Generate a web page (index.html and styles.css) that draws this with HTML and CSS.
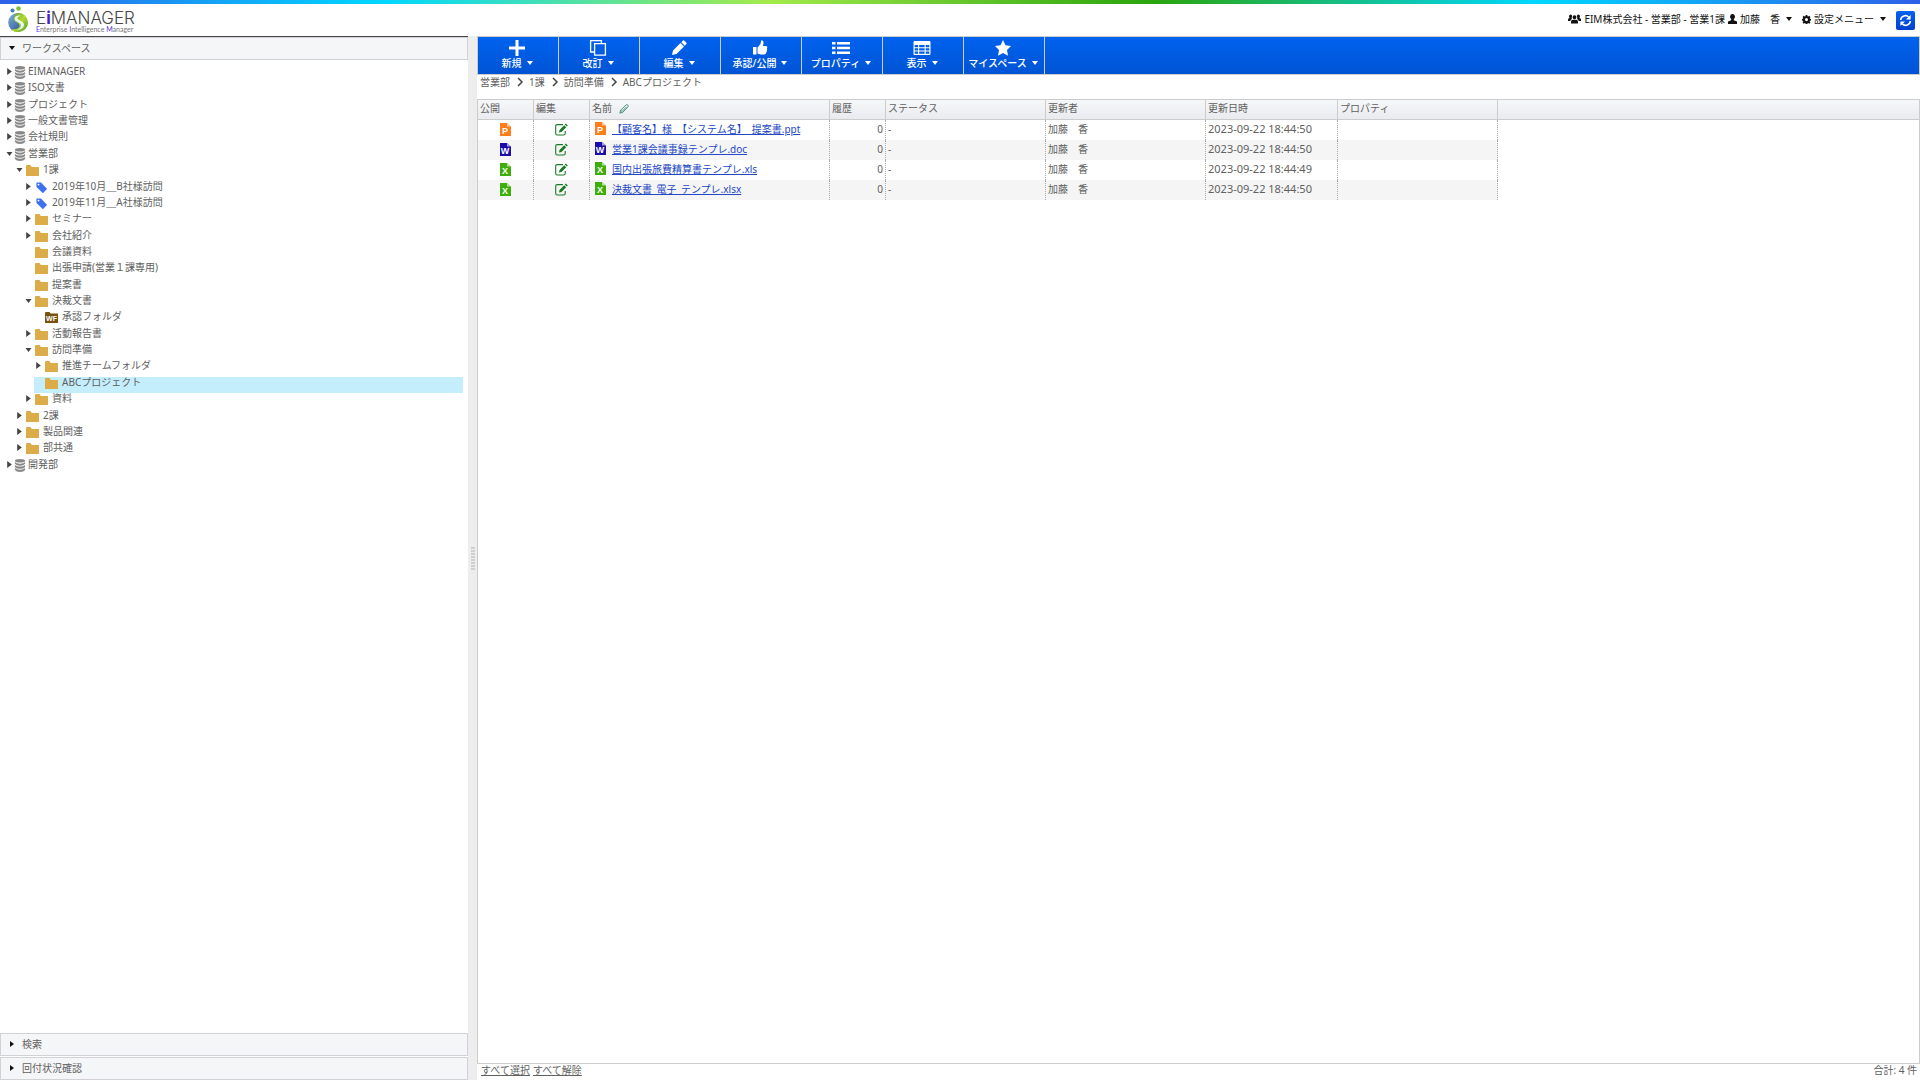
FILE: index.html
```html
<!DOCTYPE html>
<html lang="ja">
<head>
<meta charset="utf-8">
<title>EIMANAGER</title>
<meta name="viewport" content="width=device-width, initial-scale=1">
<link rel="stylesheet" href="styles.css">
</head>
<body>
<svg class="sprite" aria-hidden="true">
  <defs>
    <linearGradient id="g-blue" x1="0" y1="0" x2="1" y2="1"><stop offset="0" stop-color="#7fb6d8"/><stop offset="1" stop-color="#1d3f8f"/></linearGradient>
    <linearGradient id="g-green" x1="0" y1="0" x2="1" y2="1"><stop offset="0" stop-color="#4f9e2c"/><stop offset=".5" stop-color="#b5d92a"/><stop offset="1" stop-color="#4c9a3a"/></linearGradient>
    <symbol id="right" viewBox="0 0 4 6"><path d="M0 0l4 3-4 3z"/></symbol>
    <symbol id="down" viewBox="0 0 6 4"><path d="M0 0h6L3 4z"/></symbol>
    <symbol id="db" viewBox="0 0 12 14"><ellipse cx="6" cy="2" rx="5.500" ry="1.900"/><path d="M.5 3.200Q2 5 6 5t5.500-1.800V5.200Q10 7.200 6 7.200T.5 5.200zM.5 6.500Q2 8.200 6 8.200t5.500-1.700V8.500Q10 10.500 6 10.500T.5 8.500zM.5 9.700Q2 11.500 6 11.500t5.500-1.800V11.900Q10 13.900 6 13.900T.5 11.900z"/></symbol>
    <symbol id="folder" viewBox="0 0 13 11"><path d="M0 1Q0 0 1 0h3.500l1.300 2H13v9H0z"/></symbol>
    <symbol id="tag" viewBox="0 0 12 12"><path fill-rule="evenodd" d="M.5 1Q.5.500 1 .500h4.500L11.700 7q.5.500 0 1L8 11.700q-.5.500-1 0L.5 5.500zM2.800 1.800a1 1 0 100 2 1 1 0 000-2z"/></symbol>
    <symbol id="pen" viewBox="0 0 16 16"><path d="M1 15l1-4.500L9.500 3 13 6.500 5.500 14zM10.300 2.200L12 .6q.6-.5 1.200 0l2.200 2.200q.6.600 0 1.200l-1.600 1.700z"/></symbol>
    <symbol id="edit" viewBox="0 0 13 13"><path fill="none" stroke="currentColor" stroke-width="1.100" d="M8 1.600H2.200Q.7 1.600.7 3v7.500Q.7 12 2.200 12h6.500q1.500 0 1.500-1.500V8"/><path d="M4 9.500l.5-2.600L9.200 2.200l2 2-4.700 4.700zM9.800 1.600l1-1 2 2-1 1z"/></symbol>
    <symbol id="page" viewBox="0 0 11 13"><path d="M0 0h7l4 3.500V13H0z"/><path fill="#fff" opacity=".6" d="M7 0v3.500h4z"/></symbol>
  </defs>
</svg>

<div class="app">
  <div class="rainbow"></div>
  <header class="top">
    <a class="brand" href="#">
      <svg class="mark" viewBox="0 0 20 27" aria-hidden="true">
        <circle cx="4.500" cy="4.500" r="2" fill="#3d7fb0"/><circle cx="10.500" cy="2.500" r="2.200" fill="#7cc22e"/>
        <circle cx="9.700" cy="16.500" r="9.500" fill="url(#g-blue)"/>
        <path fill="url(#g-green)" d="M10 7a9.500 9.500 0 011 19c-5 .3-7-1.500-7.500-3 4 1 8-.5 8-3.500 0-3.500-6-3-6-7C5.500 9.500 8 8 10 7z"/>
        <path fill="#e8f6fa" d="M13 10c-3-1-6.500 0-6.500 2.800 0 3.200 6.500 3 6.500 6.700 0 2-2 3.700-4 4.200 4 0 7-2 7-5 0-4-6.500-4-6.500-6.500 0-1.200 1.500-2.200 3.500-2.200z"/>
      </svg>
      <span class="wordmark">
        <span class="name">E<b>i</b>MANAGER</span>
        <span class="sub"><i>E</i>nterprise <i>I</i>ntelligence <i>M</i>anager</span>
      </span>
    </a>
    <nav class="account">
      <span class="who">
        <svg class="ic-users" viewBox="0 0 13 10"><path d="M6.500 1.200a1.900 2 0 110 4 1.900 2 0 010-4zM3 9.500V7.800Q3 6 5 5.800h3Q10 6 10 7.800v1.700zM2.600.5a1.500 1.600 0 011.200 2.600Q3.500 4.500 4 5 2.500 5.500 2.300 7H0V5.600Q0 4.300 1.700 4 .8 3 1 2 1.300.5 2.600.5zM10.400.5a1.500 1.600 0 00-1.200 2.600Q9.500 4.500 9 5q1.500.5 1.700 2H13V5.600Q13 4.300 11.300 4q.9-1 .7-2Q11.700.5 10.400.5z"/></svg>
        <span>EIM株式会社 - 営業部 - 営業1課</span>
      </span>
      <button class="menu" type="button">
        <svg class="ic-user" viewBox="0 0 9 10"><path d="M4.500 0a2.400 2.700 0 011.300 5v1.200L9 7.500V10H0V7.500l3.200-1.300V5A2.400 2.700 0 014.500 0z"/></svg>
        <span>加藤　香</span>
        <svg class="ic-down"><use href="#down"/></svg>
      </button>
      <button class="menu" type="button">
        <svg class="ic-gear" viewBox="0 0 16 16"><path fill-rule="evenodd" d="M6.600 0h2.800l.4 2.200 1.300.6L13 1.500l2 2-1.300 1.800.6 1.400 2.200.3v2.800l-2.200.4-.6 1.300 1.300 1.900-2 2-1.900-1.300-1.300.6-.4 2.200H6.600l-.4-2.200-1.300-.6L3 15.400l-2-2 1.300-1.900-.6-1.300L0 9.800V7l1.700-.3.6-1.400L1 3.500l2-2 1.900 1.300 1.300-.6zM8 5.500a2.700 2.700 0 100 5.400 2.700 2.700 0 000-5.400z"/></svg>
        <span>設定メニュー</span>
        <svg class="ic-down"><use href="#down"/></svg>
      </button>
      <button class="refresh" type="button" aria-label="更新">
        <svg viewBox="0 0 14 14"><path fill="none" stroke="#fff" stroke-width="1.700" d="M1.800 6.500A5 5 0 0110.500 3.500M12.200 7.500A5 5 0 013.500 10.500"/><path fill="#fff" d="M12.500 1v5h-5zM1.500 13V8h5z"/></svg>
      </button>
    </nav>
  </header>

  <div class="work">
    <aside class="side">
      <button class="fold" type="button" aria-expanded="true"><svg class="ic-down"><use href="#down"/></svg>ワークスペース</button>
      <div class="treebox">
      <ul class="tree">
        <li class="l0"><svg class="ar"><use href="#right"/></svg><svg class="db"><use href="#db"/></svg>EIMANAGER</li>
        <li class="l0"><svg class="ar"><use href="#right"/></svg><svg class="db"><use href="#db"/></svg>ISO文書</li>
        <li class="l0"><svg class="ar"><use href="#right"/></svg><svg class="db"><use href="#db"/></svg>プロジェクト</li>
        <li class="l0"><svg class="ar"><use href="#right"/></svg><svg class="db"><use href="#db"/></svg>一般文書管理</li>
        <li class="l0"><svg class="ar"><use href="#right"/></svg><svg class="db"><use href="#db"/></svg>会社規則</li>
        <li class="l0"><svg class="ar open"><use href="#down"/></svg><svg class="db"><use href="#db"/></svg>営業部</li>
        <li class="l1"><svg class="ar open"><use href="#down"/></svg><svg class="fd"><use href="#folder"/></svg>1課</li>
        <li class="l2"><svg class="ar"><use href="#right"/></svg><svg class="fd tag"><use href="#tag"/></svg>2019年10月＿B社様訪問</li>
        <li class="l2"><svg class="ar"><use href="#right"/></svg><svg class="fd tag"><use href="#tag"/></svg>2019年11月＿A社様訪問</li>
        <li class="l2"><svg class="ar"><use href="#right"/></svg><svg class="fd"><use href="#folder"/></svg>セミナー</li>
        <li class="l2"><svg class="ar"><use href="#right"/></svg><svg class="fd"><use href="#folder"/></svg>会社紹介</li>
        <li class="l2"><svg class="ar"></svg><svg class="fd"><use href="#folder"/></svg>会議資料</li>
        <li class="l2"><svg class="ar"></svg><svg class="fd"><use href="#folder"/></svg>出張申請(営業１課専用)</li>
        <li class="l2"><svg class="ar"></svg><svg class="fd"><use href="#folder"/></svg>提案書</li>
        <li class="l2"><svg class="ar open"><use href="#down"/></svg><svg class="fd"><use href="#folder"/></svg>決裁文書</li>
        <li class="l3"><svg class="ar"></svg><svg class="fd wf" viewBox="0 0 13 11"><path d="M0 1Q0 0 1 0h3.500l1.300 1.500H13V11H0z"/><text x="6.500" y="9" text-anchor="middle">WF</text></svg>承認フォルダ</li>
        <li class="l2"><svg class="ar"><use href="#right"/></svg><svg class="fd"><use href="#folder"/></svg>活動報告書</li>
        <li class="l2"><svg class="ar open"><use href="#down"/></svg><svg class="fd"><use href="#folder"/></svg>訪問準備</li>
        <li class="l3"><svg class="ar"><use href="#right"/></svg><svg class="fd"><use href="#folder"/></svg>推進チームフォルダ</li>
        <li class="l3 on"><svg class="ar"></svg><svg class="fd"><use href="#folder"/></svg>ABCプロジェクト</li>
        <li class="l2"><svg class="ar"><use href="#right"/></svg><svg class="fd"><use href="#folder"/></svg>資料</li>
        <li class="l1"><svg class="ar"><use href="#right"/></svg><svg class="fd"><use href="#folder"/></svg>2課</li>
        <li class="l1"><svg class="ar"><use href="#right"/></svg><svg class="fd"><use href="#folder"/></svg>製品関連</li>
        <li class="l1"><svg class="ar"><use href="#right"/></svg><svg class="fd"><use href="#folder"/></svg>部共通</li>
        <li class="l0"><svg class="ar"><use href="#right"/></svg><svg class="db"><use href="#db"/></svg>開発部</li>
      </ul>
      </div>
      <button class="fold" type="button" aria-expanded="false"><svg class="ic-right"><use href="#right"/></svg>検索</button>
      <button class="fold last" type="button" aria-expanded="false"><svg class="ic-right"><use href="#right"/></svg>回付状況確認</button>
    </aside>
    <div class="splitter"><span></span><span></span><span></span><span></span><span></span><span></span><span></span><span></span></div>
    <main class="main">
      <div class="toolbar">
        <button type="button"><svg viewBox="0 0 18 16"><path d="M7.500 0h3v6.500H17v3h-6.500V16h-3V9.500H1v-3h6.500z"/></svg><span>新規<svg class="ic-down"><use href="#down"/></svg></span></button>
        <button type="button"><svg viewBox="0 0 18 16"><path fill="none" stroke="currentColor" stroke-width="1.300" d="M5.600 3.600h10.800v11.500H5.600zM5 12H1.600V.7h10.800V3"/></svg><span>改訂<svg class="ic-down"><use href="#down"/></svg></span></button>
        <button type="button"><svg viewBox="-1 0 18 16"><use href="#pen" width="16" height="16"/></svg><span>編集<svg class="ic-down"><use href="#down"/></svg></span></button>
        <button type="button"><svg viewBox="0 0 18 16"><path d="M2 7h3.500v7.500H2zM6.500 7.500L9.500 4l.5-3q.2-.8 1-.7 1.800.4 1.500 3L12 6h3q1.600.2 1.300 1.600l-.4 1q.6 1-.2 2 .4 1-.5 1.800.1 1.700-1.600 2.100H9.500l-3-1z"/></svg><span>承認/公開<svg class="ic-down"><use href="#down"/></svg></span></button>
        <button type="button"><svg viewBox="0 0 18 16"><path d="M0 2h3.500v2.500H0zM5 2h13v2.500H5zM0 6.700h3.500v2.500H0zM5 6.700h13v2.500H5zM0 11.500h3.500V14H0zM5 11.500h13V14H5z"/></svg><span>プロパティ<svg class="ic-down"><use href="#down"/></svg></span></button>
        <button type="button"><svg viewBox="0 0 18 16"><path fill-rule="evenodd" d="M1.500 1h15q1 0 1 1v12q0 1-1 1h-15q-1 0-1-1V2q0-1 1-1zM1.700 5v2.200h3.400V5zM6.200 5v2.200h5.400V5zM12.700 5v2.200h3.600V5zM1.700 8.300v2.200h3.400V8.300zM6.200 8.300v2.200h5.400V8.300zM12.700 8.300v2.200h3.600V8.300zM1.700 11.600v2.200h3.400v-2.200zM6.200 11.600v2.200h5.400v-2.200zM12.700 11.600v2.200h3.600v-2.200z"/></svg><span>表示<svg class="ic-down"><use href="#down"/></svg></span></button>
        <button type="button"><svg viewBox="0 0 18 16"><path d="M9 0l2.500 5.300 5.500.7-4 4 1 5.800-5-2.800-5 2.800L5 10 1 6l5.500-.7z"/></svg><span>マイスペース<svg class="ic-down"><use href="#down"/></svg></span></button>
      </div>
      <nav class="crumbs">
        <a href="#">営業部</a><svg viewBox="0 0 5 8"><path d="M1 0l4 4-4 4"/></svg>
        <a href="#">1課</a><svg viewBox="0 0 5 8"><path d="M1 0l4 4-4 4"/></svg>
        <a href="#">訪問準備</a><svg viewBox="0 0 5 8"><path d="M1 0l4 4-4 4"/></svg>
        <a href="#">ABCプロジェクト</a>
      </nav>
      <div class="grid">
        <table>
          <colgroup><col class="w-s"><col class="w-s"><col class="w-name"><col class="w-s"><col class="w-m"><col class="w-m"><col class="w-date"><col class="w-m"><col></colgroup>
          <thead>
            <tr><th>公開</th><th>編集</th><th>名前<svg class="clip" viewBox="0 0 12 12"><path d="M1 11l1-3.500L8.500 1q1-.7 2 .3t.3 2L4.500 10zM4 8.500l5-5M2 7.500L4.500 10"/></svg></th><th>履歴</th><th>ステータス</th><th>更新者</th><th>更新日時</th><th>プロパティ</th><td></td></tr>
          </thead>
          <tbody>
            <tr>
              <td class="mid"><svg class="file ppt" viewBox="0 0 11 13"><use href="#page"/><text x="5" y="11" text-anchor="middle">P</text></svg></td>
              <td class="mid"><svg class="edit"><use href="#edit"/></svg></td>
              <td><div class="doc"><svg class="file ppt" viewBox="0 0 11 13"><use href="#page"/><text x="5" y="11" text-anchor="middle">P</text></svg><a href="#">【顧客名】様　【システム名】　提案書.ppt</a></div></td>
              <td class="num">0</td><td>-</td><td>加藤　香</td><td class="date">2023-09-22 18:44:50</td><td></td><td></td>
            </tr>
            <tr>
              <td class="mid"><svg class="file word" viewBox="0 0 11 13"><use href="#page"/><text x="5" y="11" text-anchor="middle">W</text></svg></td>
              <td class="mid"><svg class="edit"><use href="#edit"/></svg></td>
              <td><div class="doc"><svg class="file word" viewBox="0 0 11 13"><use href="#page"/><text x="5" y="11" text-anchor="middle">W</text></svg><a href="#">営業1課会議事録テンプレ.doc</a></div></td>
              <td class="num">0</td><td>-</td><td>加藤　香</td><td class="date">2023-09-22 18:44:50</td><td></td><td></td>
            </tr>
            <tr>
              <td class="mid"><svg class="file xls" viewBox="0 0 11 13"><use href="#page"/><text x="5" y="11" text-anchor="middle">X</text></svg></td>
              <td class="mid"><svg class="edit"><use href="#edit"/></svg></td>
              <td><div class="doc"><svg class="file xls" viewBox="0 0 11 13"><use href="#page"/><text x="5" y="11" text-anchor="middle">X</text></svg><a href="#">国内出張旅費精算書テンプレ.xls</a></div></td>
              <td class="num">0</td><td>-</td><td>加藤　香</td><td class="date">2023-09-22 18:44:49</td><td></td><td></td>
            </tr>
            <tr>
              <td class="mid"><svg class="file xls" viewBox="0 0 11 13"><use href="#page"/><text x="5" y="11" text-anchor="middle">X</text></svg></td>
              <td class="mid"><svg class="edit"><use href="#edit"/></svg></td>
              <td><div class="doc"><svg class="file xls" viewBox="0 0 11 13"><use href="#page"/><text x="5" y="11" text-anchor="middle">X</text></svg><a href="#">決裁文書_電子_テンプレ.xlsx</a></div></td>
              <td class="num">0</td><td>-</td><td>加藤　香</td><td class="date">2023-09-22 18:44:50</td><td></td><td></td>
            </tr>
          </tbody>
        </table>
      </div>
      <footer class="foot">
        <a href="#">すべて選択</a>
        <a href="#">すべて解除</a>
        <span class="total">合計: 4 件</span>
      </footer>
    </main>
  </div>
</div>
</body>
</html>
```
FILE: styles.css
```css
* { box-sizing: border-box; }
body {
  margin: 0;
  color: #606060;
  background: #fff;
  font: 10px/14px "Noto Sans", "Noto Sans CJK JP", sans-serif;
}
button {
  margin: 0;
  padding: 0;
  border: 0;
  background: none;
  color: inherit;
  font: inherit;
  cursor: pointer;
}
svg { display: block; flex: none; fill: currentColor; }
a { color: inherit; }
.sprite { position: absolute; width: 0; height: 0; }
.ic-down { width: 6px; height: 4px; }
.ic-right { width: 4px; height: 6px; margin: 0 1px; }

.app { display: flex; flex-direction: column; height: 100vh; }
.rainbow {
  flex: none;
  height: 4px;
  background: linear-gradient(90deg, #2f5fe8, #00d7ff 20%, #a4ea4c 40%, #2ba40e 60%, #00d7ff 80%, #2f5fe8);
}

/* header */
.top {
  flex: none;
  display: flex;
  justify-content: space-between;
  height: 32px;
  padding: 2px 5px 0 8px;
}
.brand { display: flex; gap: 8px; text-decoration: none; color: #444; }
.mark { width: 20px; height: 27px; }
.wordmark { display: flex; flex-direction: column; padding-top: 5px; }
.name { font: 300 17px/15px Inter, sans-serif; }
.name b { color: #4a1fd0; font-weight: 700; }
.sub { font: 7px/7px Lato, sans-serif; color: #777; }
.sub i { font-style: normal; color: #5a35e8; }
.account { display: flex; align-items: center; height: 28px; color: #111; }
.who, .menu { display: flex; align-items: center; gap: 3px; padding-bottom: 2px; }
.who { margin-right: 3px; }
.menu { margin-right: 10px; }
.menu .ic-down { margin-left: 3px; }
.ic-users { width: 13px; height: 10px; }
.ic-user { width: 9px; height: 10px; }
.ic-gear { width: 9px; height: 9px; }
.refresh {
  display: grid;
  place-items: center;
  width: 19px;
  height: 19px;
  border-radius: 2px;
  background: linear-gradient(#0063f0, #0040d0);
}
.refresh svg { width: 13px; height: 13px; }

.work { flex: 1; display: flex; min-height: 0; }

/* sidebar */
.side {
  width: 468px;
  display: flex;
  flex-direction: column;
  border-top: 1px solid #444;
}
.fold {
  flex: none;
  display: flex;
  align-items: center;
  gap: 7px;
  height: 23px;
  padding: 0 8px 2px;
  border: 1px solid #d2d2d6;
  background: #f5f6f8;
}
.fold svg { color: #111; }
.fold.last { margin-top: 1px; }
.treebox { flex: 1; min-height: 0; overflow: auto; padding: 6px 5px 6px 0; }
.tree {
  display: grid;
  grid-auto-rows: 1fr;
  min-height: 409px;
  margin: 0;
  padding: 0;
  list-style: none;
  line-height: 10px;
}
.tree li { display: flex; align-items: flex-start; white-space: nowrap; }
.l0 { margin-left: 5px; }
.l1 { margin-left: 15px; }
.l2 { margin-left: 24px; }
.l3 { margin-left: 34px; }
.on { background: #c5eefc; }
.ar { width: 7px; height: 7px; margin: 2px 3px 0 1px; color: #444; }
.ar.open { height: 4px; margin-top: 4px; }
.db { width: 12px; height: 13px; margin-right: 2px; margin-left: -2px; color: #888; }
.fd { width: 13px; height: 11px; margin: 1px 4px 0 0; color: #dcac48; }
.fd.tag { color: #3f6ff2; }
.fd.wf { color: #7a5210; }
.wf text { fill: #fff; font: 700 7px "Liberation Sans", sans-serif; }

.splitter {
  flex: none;
  width: 9px;
  display: flex;
  flex-direction: column;
  align-items: center;
  justify-content: center;
  gap: 1px;
  background: #ededed;
}
.splitter span { width: 4px; height: 2px; background: #d0d0d0; }

/* main pane */
.main {
  flex: 1;
  min-width: 0;
  display: flex;
  flex-direction: column;
}
.toolbar {
  flex: none;
  display: flex;
  height: 39px;
  border: 1px solid #ccc;
  background: linear-gradient(#0062ee, #0054d4);
  color: #fff;
}
.toolbar button {
  width: 81px;
  display: flex;
  flex-direction: column;
  align-items: center;
  padding: 3px 2px 0 0;
  border-right: 1px solid #ccd;
  font-weight: 500;
}
.toolbar button > svg { width: 18px; height: 16px; }
.toolbar span { display: flex; align-items: center; gap: 5px; line-height: 14px; white-space: nowrap; }
.crumbs {
  flex: none;
  display: flex;
  align-items: center;
  gap: 7px;
  height: 24px;
  padding: 0 3px 10px;
}
.crumbs a { text-decoration: none; }
.crumbs svg { width: 5px; height: 8px; fill: none; stroke: #444; stroke-width: 1.500; overflow: visible; }

.grid { flex: 1; min-height: 0; overflow: auto; border: 1px solid #ccc; }
table { width: 100%; table-layout: fixed; border-collapse: separate; border-spacing: 0; }
.w-s { width: 56px; }
.w-name { width: 240px; }
.w-m { width: 160px; }
.w-date { width: 132px; }
th, td { height: 20px; padding: 0 2px 3px; text-align: left; white-space: nowrap; font-weight: 400; }
thead th, thead td { border-bottom: 1px solid #ccc; background: linear-gradient(#f6f7f9, #eaebef); }
thead th { border-right: 1px solid #ccc; }
tbody td:not(:last-child) { border-right: 1px dotted #aaa; }
tbody tr:nth-child(even) td:not(:last-child) { background: #f5f5f5; }
.clip {
  display: inline-block;
  width: 10px;
  height: 10px;
  margin-left: 7px;
  vertical-align: middle;
  fill: none;
  stroke: #2f8068;
}
td.num { text-align: right; }
td.date { font-size: 11px; }
td.mid { padding-bottom: 1px; }
.mid svg { margin: 0 auto; }
.edit { width: 13px; height: 13px; color: #187a24; }
.doc { display: flex; align-items: center; gap: 6px; padding-left: 3px; color: #2347c5; }
.file { width: 11px; height: 13px; }
.file text { fill: #fff; font: 700 9px "Liberation Sans", sans-serif; }
.ppt { color: #ff7d1a; }
.word { color: #1a0dab; }
.xls { color: #3fae0a; }

.foot { flex: none; display: flex; gap: 3px; height: 16px; padding: 0 3px 0 4px; line-height: 12px; }
.total { margin-left: auto; }
```
